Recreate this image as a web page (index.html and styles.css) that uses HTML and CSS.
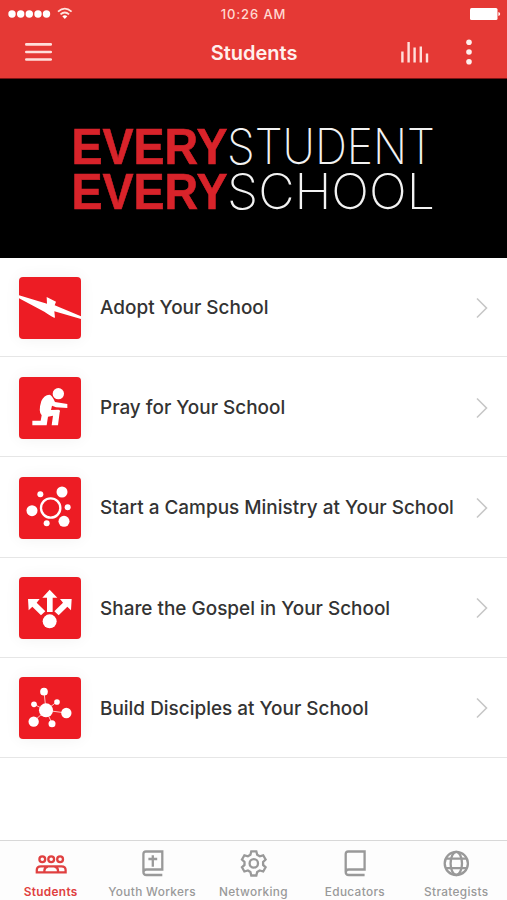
FILE: index.html
```html
<!DOCTYPE html>
<html lang="en">
<head>
    <meta charset="UTF-8">
    <meta name="viewport" content="width=device-width, initial-scale=1.0">
    <title>Students</title>
    <link rel="stylesheet" href="styles.css">
</head>
<body>
    <div class="app">
        <header class="header">
            <div class="status-bar">
                <svg class="signal" viewBox="0 0 66 14">
                    <circle cx="4" cy="7" r="3.7"/>
                    <circle cx="12.7" cy="7" r="3.7"/>
                    <circle cx="21.3" cy="7" r="3.7"/>
                    <circle cx="30" cy="7" r="3.7"/>
                    <circle cx="38.5" cy="7" r="3.7"/>
                    <g class="wifi">
                        <path d="M50 4.6q6.8-6 13.6 0"/>
                        <path d="M52.5 7.4q4.3-3.8 8.6 0"/>
                    </g>
                    <path d="M54.3 9.3q2.5-2 5 0l-2.5 2.6z"/>
                </svg>
                <span class="time">10:26 AM</span>
                <svg class="battery" viewBox="0 0 31 12">
                    <rect width="27.5" height="12" rx="1.5"/>
                    <path d="M28.4 4q1.8.4 1.8 2t-1.8 2z"/>
                </svg>
            </div>
            <div class="nav-bar">
                <svg class="menu-icon" viewBox="0 0 28 20">
                    <path d="M2.3 2.4h24.5M2.3 10h24.5M2.3 17.5h24.5"/>
                </svg>
                <h1 class="title">Students</h1>
                <svg class="stats-icon" viewBox="0 0 28 22">
                    <path d="M1.4 10.5v11M7.6 1v20.5M13.6 6.5v15M19.8 5.5v16M26 12.5v9"/>
                </svg>
                <svg class="more-icon" viewBox="0 0 6 26">
                    <circle cx="3" cy="3.3" r="2.8"/>
                    <circle cx="3" cy="13" r="2.8"/>
                    <circle cx="3" cy="22.7" r="2.8"/>
                </svg>
            </div>
        </header>

        <svg class="banner" viewBox="0 0 507 179">
            <text class="bold" x="71.5" y="84.8" textLength="156" lengthAdjust="spacingAndGlyphs">EVERY</text>
            <text class="thin" x="227" y="84.8" textLength="208" lengthAdjust="spacingAndGlyphs">STUDENT</text>
            <text class="bold" x="71.5" y="129.5" textLength="156" lengthAdjust="spacingAndGlyphs">EVERY</text>
            <text class="thin" x="227" y="129.5" textLength="208" lengthAdjust="spacingAndGlyphs">SCHOOL</text>
        </svg>

        <main class="list">
            <a class="row">
                <svg class="tile" viewBox="0 0 186 186">
                    <path d="M0 55L84 80 83 60 111 74 107 85 186 118V126L106 103 108 122Q102 122 76 104L0 64z"/>
                </svg>
                <span class="label">Adopt Your School</span>
                <svg class="chevron" viewBox="0 0 12 22"><path d="M1 1.5L10.5 11 1 20.5"/></svg>
            </a>
            <a class="row">
                <svg class="tile" viewBox="0 0 186 186">
                    <circle cx="118" cy="50" r="17"/>
                    <path d="M67 72Q75 54 91 53Q99 54 108 75L145 81V93L111 91 99 86 96 99 118 98Q125 99 122 106L117 145H98L102 116 87 119 83 145H40V131H65L68 115Q57 104 67 72z"/>
                </svg>
                <span class="label">Pray for Your School</span>
                <svg class="chevron" viewBox="0 0 12 22"><path d="M1 1.5L10.5 11 1 20.5"/></svg>
            </a>
            <a class="row">
                <svg class="tile" viewBox="0 0 186 186">
                    <circle class="ring" cx="95" cy="93" r="29"/>
                    <circle cx="64" cy="52" r="9"/>
                    <circle cx="129" cy="45" r="16.5"/>
                    <circle cx="39" cy="101" r="16.5"/>
                    <circle cx="146" cy="91" r="9"/>
                    <circle cx="135" cy="133" r="16.5"/>
                    <circle cx="83" cy="139" r="9"/>
                </svg>
                <span class="label">Start a Campus Ministry at Your School</span>
                <svg class="chevron" viewBox="0 0 12 22"><path d="M1 1.5L10.5 11 1 20.5"/></svg>
            </a>
            <a class="row">
                <svg class="tile" viewBox="0 0 186 186">
                    <circle cx="92" cy="133" r="21"/>
                    <path d="M92 38L115 62H101V105H84V62H70z"/>
                    <path d="M27 66H62L53 77 79 103 66 115 40 89 29 100z"/>
                    <path d="M158 66H123L132 77 106 103 119 115 145 89 156 100z"/>
                </svg>
                <span class="label">Share the Gospel in Your School</span>
                <svg class="chevron" viewBox="0 0 12 22"><path d="M1 1.5L10.5 11 1 20.5"/></svg>
            </a>
            <a class="row">
                <svg class="tile" viewBox="0 0 186 186">
                    <path class="link" d="M81 100L75 44M81 100L45 82M81 100L114 74M81 100L142 108M81 100L44 133M81 100L99 139"/>
                    <circle cx="81" cy="100" r="21"/>
                    <circle cx="75" cy="44" r="11.5"/>
                    <circle cx="45" cy="82" r="8.5"/>
                    <circle cx="114" cy="75" r="8.5"/>
                    <circle cx="142" cy="108" r="15.5"/>
                    <circle cx="44" cy="134" r="15.5"/>
                    <circle cx="99" cy="140" r="10.5"/>
                </svg>
                <span class="label">Build Disciples at Your School</span>
                <svg class="chevron" viewBox="0 0 12 22"><path d="M1 1.5L10.5 11 1 20.5"/></svg>
            </a>
        </main>

        <nav class="tabs">
            <a class="tab active">
                <svg viewBox="0 0 32 28">
                    <circle cx="7.3" cy="10.3" r="2.9"/>
                    <circle cx="16.2" cy="10.3" r="2.9"/>
                    <circle cx="25.1" cy="10.3" r="2.9"/>
                    <path d="M1.8 23.3V21q0-3.6 4.2-3.6h20.4q4.2 0 4.2 3.6v2.3zM9.4 23v-1.5q0-3 3.4-3.8M23 23v-1.5q0-3-3.4-3.8"/>
                </svg>
                <span>Students</span>
            </a>
            <a class="tab">
                <svg viewBox="0 0 32 28">
                    <path d="M26.3 26H10.4q-3 0-3-3V5q0-2.5 2.5-2.5h16.4v18H10.4q-3 0-3 2.8M16.8 6.2v11.6M12.4 10h8.8"/>
                </svg>
                <span>Youth Workers</span>
            </a>
            <a class="tab">
                <svg viewBox="0 0 32 28">
                    <path d="M14.3 2.3h5l.9 3.5 2.5 1.5 3.5-1 2.4 4.2-2.5 2.4v3l2.5 2.4-2.4 4.2-3.5-1-2.5 1.5-.9 3.5h-5l-.9-3.5-2.5-1.5-3.5 1-2.4-4.2 2.5-2.4v-3L5 10.5l2.4-4.2 3.5 1 2.5-1.5z"/>
                    <circle cx="16.8" cy="14.4" r="4.2"/>
                </svg>
                <span>Networking</span>
            </a>
            <a class="tab">
                <svg viewBox="0 0 32 28">
                    <path d="M25.6 26H9.7q-3 0-3-3V5q0-2.5 2.5-2.5h16.4v18H9.7q-3 0-3 2.8"/>
                </svg>
                <span>Educators</span>
            </a>
            <a class="tab">
                <svg viewBox="0 0 32 28">
                    <circle cx="16.3" cy="14.4" r="11.6"/>
                    <ellipse cx="16.3" cy="14.4" rx="5.7" ry="11.6"/>
                    <path d="M6 9.6h20.6M6 19.2h20.6"/>
                </svg>
                <span>Strategists</span>
            </a>
        </nav>
    </div>
</body>
</html>
```
FILE: styles.css
```css
* {
    box-sizing: border-box;
}

body {
    margin: 0;
    font-family: Inter, 'Liberation Sans', sans-serif;
    background: #fff;
}

.app {
    display: flex;
    flex-direction: column;
    width: 507px;
    height: 900px;
    overflow: hidden;
}

/* Header */
.header {
    height: 79px;
    background: #e53935;
    border-bottom: 1px solid #7b1414;
    color: #fff0ed;
    fill: #fff0ed;
}

.status-bar {
    display: grid;
    grid-template-columns: 1fr auto 1fr;
    align-items: center;
    height: 27px;
    padding: 0 6px 0 8px;
}

.signal {
    width: 66px;
    height: 14px;
    fill: #fff;
}

.wifi {
    fill: none;
    stroke: #ffe4de;
    stroke-width: 1.8;
}

.time {
    font-size: 13px;
    font-weight: 500;
    letter-spacing: 0.9px;
    margin-left: -2px;
    color: #ffd9d2;
}

.battery {
    justify-self: end;
    width: 31px;
    height: 12px;
    fill: #fff;
}

.nav-bar {
    display: grid;
    grid-template-columns: 70px 1fr 28px 42.5px;
    align-items: center;
    height: 50px;
    padding: 0 35.5px 0 24px;
}

.menu-icon {
    width: 28px;
    height: 20px;
    fill: none;
    stroke: #ffdfdb;
    stroke-width: 2.6;
    stroke-linecap: round;
}

.title {
    margin: 0;
    padding: 1px 0 0 13px;
    text-align: center;
    font-size: 20px;
    font-weight: 600;
}

.stats-icon {
    width: 28px;
    height: 22px;
    stroke: #ffe0db;
    stroke-width: 2.4;
}

.more-icon {
    justify-self: end;
    width: 6px;
    height: 26px;
}

/* Banner */
.banner {
    width: 507px;
    height: 179px;
    background: #000;
    flex-shrink: 0;
}

.banner .bold {
    font: bold 50px 'Liberation Sans', sans-serif;
    fill: #d8232a;
    stroke: #d8232a;
    stroke-width: 0.6;
}

.banner .thin {
    font: 200 49px Inter, 'Liberation Sans', sans-serif;
    fill: #f2f2f2;
}

/* List */
.list {
    flex: 1;
    margin-top: -1px;
}

.row {
    display: flex;
    align-items: center;
    height: 100.2px;
    padding: 2px 19px 0;
    border-bottom: 1px solid #e6e6e6;
}

.tile {
    width: 62px;
    height: 62px;
    background: #ed1c24;
    border-radius: 4px;
    box-shadow: 0 0 16px rgba(0, 0, 0, 0.06);
    fill: #fff;
}

.tile .ring {
    fill: none;
    stroke: #fff;
    stroke-width: 7;
}

.tile .link {
    stroke: #ffc5c5;
    stroke-width: 3;
}

.label {
    flex: 1;
    padding-left: 19px;
    font-size: 18.95px;
    font-weight: 500;
    color: #333;
    white-space: nowrap;
}

.chevron {
    width: 12px;
    height: 22px;
    fill: none;
    stroke: #c7c7c7;
    stroke-width: 1.6;
}

/* Tabs */
.tabs {
    display: grid;
    grid-template-columns: repeat(5, 1fr);
    height: 60px;
    border-top: 1px solid #d8d8d8;
    background: #fdfdfd;
}

.tab {
    display: flex;
    flex-direction: column;
    align-items: center;
    padding-top: 8px;
    font-size: 11.8px;
    font-weight: 500;
    letter-spacing: 0.35px;
    color: #999;
}

.tab svg {
    width: 32px;
    height: 28px;
    fill: none;
    stroke: currentColor;
    stroke-width: 2.3;
}

.tab span {
    margin-top: 8px;
    line-height: 15px;
    white-space: nowrap;
}

.tab.active {
    color: #e04040;
    font-weight: 600;
}
```
